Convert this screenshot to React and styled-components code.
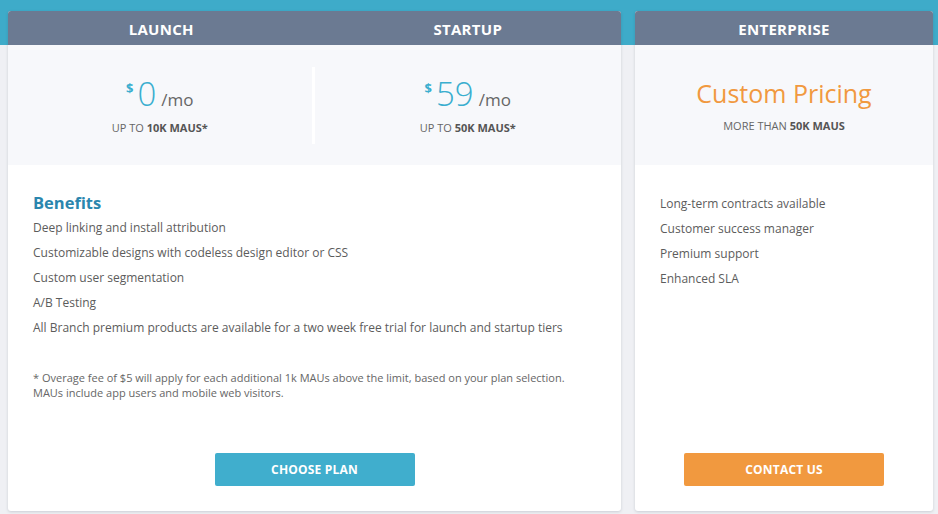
import styled, { createGlobalStyle } from "styled-components";

const GlobalStyle = createGlobalStyle`
  html, body {
    margin: 0;
    padding: 0;
  }
  body {
    font-family: "Open Sans", "Liberation Sans", sans-serif;
    background: linear-gradient(#3eabc9 0, #3eabc9 45px, #eff0f4 45px);
    min-height: 514px;
  }
`;

const plans = [
  { name: "LAUNCH", price: "0", limit: "UP TO", amount: "10K MAUS*" },
  { name: "STARTUP", price: "59", limit: "UP TO", amount: "50K MAUS*" },
];

const benefits = [
  "Deep linking and install attribution",
  "Customizable designs with codeless design editor or CSS",
  "Custom user segmentation",
  "A/B Testing",
  "All Branch premium products are available for a two week free trial for launch and startup tiers",
];

const enterprise = [
  "Long-term contracts available",
  "Customer success manager",
  "Premium support",
  "Enhanced SLA",
];

const App = () => {
  return (
    <>
      <GlobalStyle />
      <Page>
        <Card>
          <Header $cols={2}>
            {plans.map((p) => (
              <span key={p.name}>{p.name}</span>
            ))}
          </Header>
          <PriceArea $cols={2}>
            {plans.map((p, i) => (
              <PriceCol key={p.name} $divider={i === 0}>
                <Price>
                  <Dollar>$</Dollar>
                  <Amount>{p.price}</Amount>
                  <Per>/mo</Per>
                </Price>
                <Limit>
                  {p.limit} <b>{p.amount}</b>
                </Limit>
              </PriceCol>
            ))}
          </PriceArea>
          <Body>
            <Title>Benefits</Title>
            <List>
              {benefits.map((b) => (
                <Item key={b}>{b}</Item>
              ))}
            </List>
            <Note>
              * Overage fee of $5 will apply for each additional 1k MAUs above the limit, based on your plan selection.
              <br />
              MAUs include app users and mobile web visitors.
            </Note>
            <Action $color="#40aecd">CHOOSE PLAN</Action>
          </Body>
        </Card>

        <Card>
          <Header $cols={1}>
            <span>ENTERPRISE</span>
          </Header>
          <PriceArea $cols={1}>
            <PriceCol>
              <Custom>Custom Pricing</Custom>
              <Limit>
                MORE THAN <b>50K MAUS</b>
              </Limit>
            </PriceCol>
          </PriceArea>
          <Body>
            <List>
              {enterprise.map((b) => (
                <Item key={b}>{b}</Item>
              ))}
            </List>
            <Action $color="#f1993f">CONTACT US</Action>
          </Body>
        </Card>
      </Page>
    </>
  );
};

export default App;

const Page = styled.div`
  display: grid;
  grid-template-columns: 613px 298px;
  column-gap: 14px;
  padding: 11px 0 3px 8px;
  height: 514px;
  box-sizing: border-box;
`;

const Card = styled.div`
  display: flex;
  flex-direction: column;
  background: #fff;
  border-radius: 3px;
  box-shadow: 0 1px 3px rgba(40, 50, 70, 0.18);
  overflow: hidden;
`;

const Header = styled.div`
  display: grid;
  grid-template-columns: repeat(${(p) => p.$cols}, 1fr);
  align-items: center;
  height: 34px;
  padding-top: 1px;
  box-sizing: border-box;
  background: #6b7a92;
  color: #fff;
  font-size: 15px;
  font-weight: 700;
  letter-spacing: 0.3px;
  text-align: center;
`;

const PriceArea = styled.div`
  display: grid;
  grid-template-columns: repeat(${(p) => p.$cols}, 1fr);
  height: 120px;
  background: #f7f8fb;
`;

const PriceCol = styled.div`
  display: flex;
  flex-direction: column;
  align-items: center;
  justify-content: center;
  margin: 22px 0 21px;
  border-right: ${(p) => (p.$divider ? "3px solid #fff" : "none")};
`;

const Price = styled.div`
  display: flex;
  align-items: baseline;
  color: #3aaecf;
  line-height: 1;
`;

const Dollar = styled.span`
  font-size: 13px;
  font-weight: 700;
  align-self: flex-start;
  margin-top: 5px;
  margin-right: 4px;
`;

const Amount = styled.span`
  font-size: 33px;
  font-weight: 300;
`;

const Per = styled.span`
  font-size: 17px;
  font-weight: 400;
  color: #666;
  margin-left: 5px;
`;

const Custom = styled.div`
  color: #f1993f;
  font-size: 25px;
  font-weight: 400;
  line-height: 1;
  margin: 2px 0 2px;
`;

const Limit = styled.div`
  margin-top: 10px;
  font-size: 11px;
  color: #666;

  b {
    color: #555;
    font-weight: 700;
  }
`;

const Body = styled.div`
  flex: 1;
  display: flex;
  flex-direction: column;
  padding: 26px 25px 25px;
`;

const Title = styled.h3`
  margin: 0 0 1px;
  font-size: 16.5px;
  font-weight: 700;
  color: #2a86ae;
`;

const List = styled.ul`
  list-style: none;
  margin: 0;
  padding: 0;
`;

const Item = styled.li`
  font-size: 12px;
  line-height: 25px;
  color: #5c5c5c;
`;

const Note = styled.p`
  margin: 30px 0 0;
  font-size: 11px;
  line-height: 15px;
  color: #666;
`;

const Action = styled.button`
  align-self: center;
  margin-top: auto;
  width: 200px;
  height: 33px;
  border: none;
  border-radius: 2px;
  background: ${(p) => p.$color};
  color: #fff;
  font-family: inherit;
  font-size: 12px;
  font-weight: 700;
  letter-spacing: 0.2px;
`;
